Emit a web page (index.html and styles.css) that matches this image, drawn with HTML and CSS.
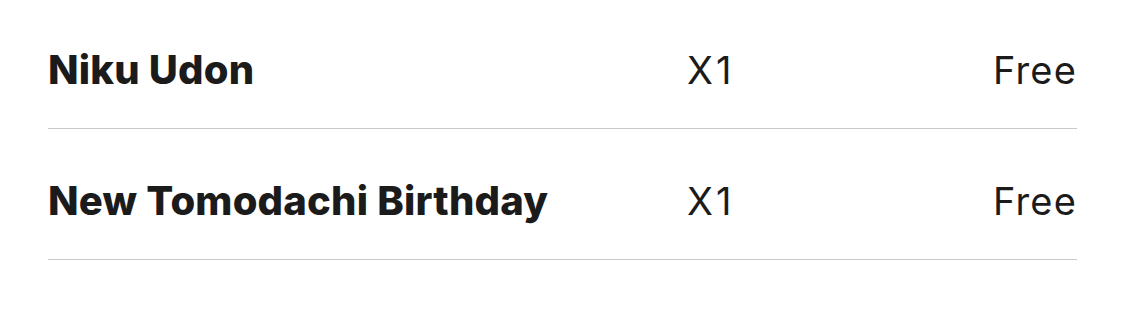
FILE: index.html
```html
<!DOCTYPE html>
<html lang="en">
<head>
  <meta charset="UTF-8" />
  <title>Order items</title>
  <link rel="stylesheet" href="styles.css">
</head>
<body>
  <div class="order-list">
    <div class="order-row">
      <div class="item-name">Niku Udon</div>
      <div class="item-qty">X1</div>
      <div class="item-price">Free</div>
    </div>
    <div class="order-row">
      <div class="item-name">New Tomodachi Birthday</div>
      <div class="item-qty">X1</div>
      <div class="item-price">Free</div>
    </div>
  </div>
</body>
</html>
```

FILE: styles.css
```css
body {
  margin: 0;
  background: #fff;
  color: #1c1b1b;
  font-family: Inter, "Liberation Sans", sans-serif;
  overflow: hidden;
}
.order-list {
  padding: 0 47px 0 48px;
}
.order-row {
  display: grid;
  grid-template-columns: 639px 1fr auto;
  align-items: center;
  padding: 44px 0 30px;
  border-bottom: 1px solid #c8c8c8;
  line-height: 56px;
}
.order-row:first-child {
  padding-top: 42px;
}
.item-name {
  font-size: 40px;
  font-weight: 800;
  letter-spacing: 0.2px;
}
.item-qty,
.item-price {
  font-size: 38px;
  font-weight: 400;
}
.item-qty {
  letter-spacing: 3px;
}
.item-price {
  text-align: right;
  letter-spacing: 1.2px;
}
```
